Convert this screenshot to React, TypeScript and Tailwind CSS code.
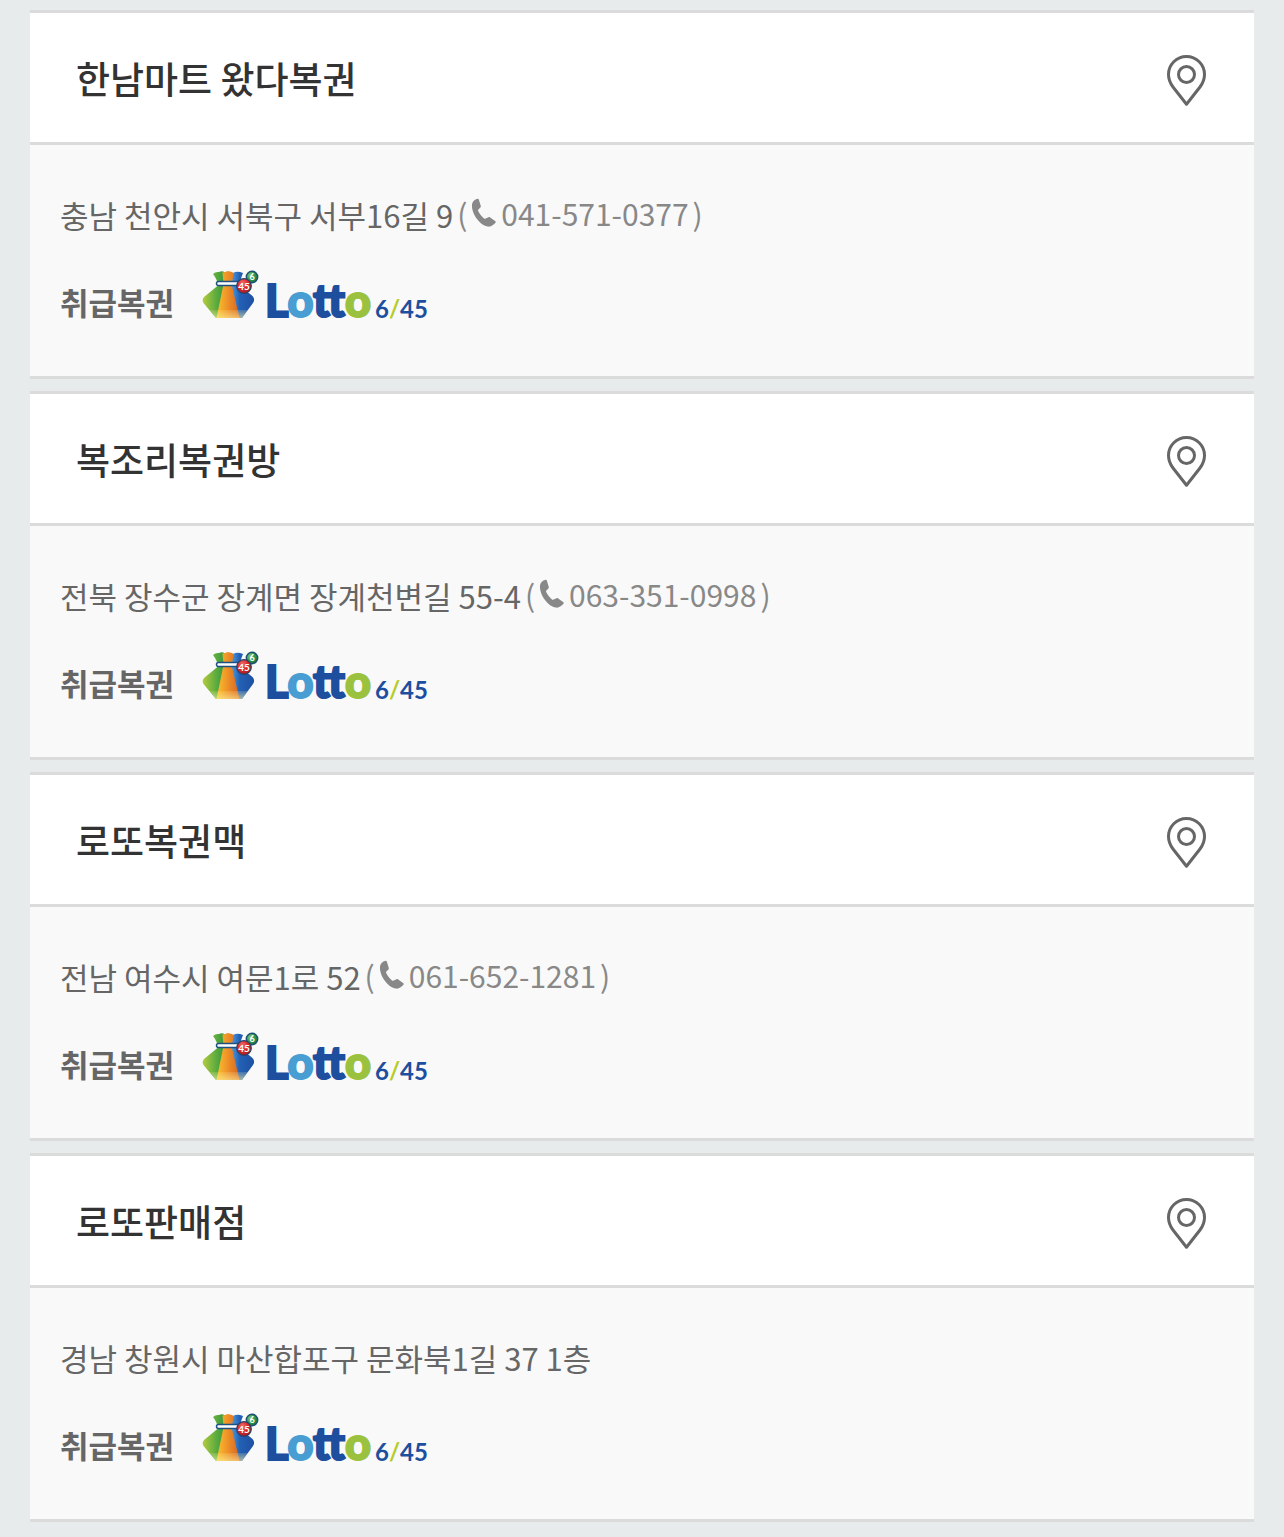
type Store = { name: string; address: string; phone?: string };

const stores: Store[] = [
  { name: '한남마트 왔다복권', address: '충남 천안시 서북구 서부16길 9', phone: '041-571-0377' },
  { name: '복조리복권방', address: '전북 장수군 장계면 장계천변길 55-4', phone: '063-351-0998' },
  { name: '로또복권맥', address: '전남 여수시 여문1로 52', phone: '061-652-1281' },
  { name: '로또판매점', address: '경남 창원시 마산합포구 문화북1길 37 1층' },
];

function PinIcon() {
  return (
    <svg width="40" height="56" viewBox="0 -3 40 56" fill="none" stroke="#666" strokeWidth="3" aria-hidden="true">
      <path d="M20.500 51.200L7 34C4 30 2.500 26 2.500 21.500a18 18 0 0 1 36 0C38.500 26 37 30 34 34Z" strokeLinejoin="round" />
      <circle cx="20.500" cy="21.500" r="8" />
    </svg>
  );
}

function PhoneIcon() {
  return (
    <svg width="26" height="30" viewBox="0 0 26 30" fill="#888" aria-hidden="true">
      <path d="M1 6.500C1.300 3.500 3.600 1.600 6.600.7c.6-.2 1 .1 1.200.7l2 6.500c.2.600 0 1-.4 1.500l-2 2c-.5.500-.5 1-.2 1.700 1.300 2.900 3.300 5.400 5.800 7.300.5.400 1 .4 1.600.1l3-1.300c.6-.3 1.100-.2 1.600.2l5.200 3.800c.5.400.6.900.2 1.400-1.700 2.400-4.500 4.300-7.600 4C9.500 27.800.2 16 1 6.500Z" />
    </svg>
  );
}

/** Pouch emblem followed by the Lotto 6/45 wordmark. */
function LottoLogo({ id }: { id: string }) {
  return (
    <svg width="232" height="64" viewBox="0 0 232 64" role="img" aria-label="Lotto 6/45">
      <defs>
        <linearGradient id={`${id}-green`} x1="0" y1="0" x2="1" y2="0">
          <stop offset="0" stopColor="#b5cb3f" />
          <stop offset="0.55" stopColor="#5dac3f" />
          <stop offset="1" stopColor="#2c9440" />
        </linearGradient>
        <linearGradient id={`${id}-orange`} x1="0" y1="0" x2="1" y2="0">
          <stop offset="0" stopColor="#f8c22e" />
          <stop offset="0.5" stopColor="#ee9028" />
          <stop offset="1" stopColor="#d56524" />
        </linearGradient>
        <linearGradient id={`${id}-blue`} x1="0" y1="0" x2="1" y2="0">
          <stop offset="0" stopColor="#55a7e5" />
          <stop offset="0.4" stopColor="#2360b4" />
          <stop offset="1" stopColor="#1d50a2" />
        </linearGradient>
        <linearGradient id={`${id}-shine`} x1="0" y1="0" x2="0" y2="1">
          <stop offset="0" stopColor="#fff3a0" stopOpacity="0.15" />
          <stop offset="1" stopColor="#fff3a0" stopOpacity="0.6" />
        </linearGradient>
        <radialGradient id={`${id}-red`} cx="0.4" cy="0.3" r="0.7">
          <stop offset="0" stopColor="#f07068" />
          <stop offset="0.5" stopColor="#dd2b2d" />
          <stop offset="1" stopColor="#a91d25" />
        </radialGradient>
        <radialGradient id={`${id}-ball`} cx="0.35" cy="0.35" r="0.75">
          <stop offset="0" stopColor="#84c58b" />
          <stop offset="0.5" stopColor="#2f9a4c" />
          <stop offset="1" stopColor="#187038" />
        </radialGradient>
      </defs>
      <path d="M11 6q2.500-2.500 6-2Q20 2.500 23 4.500L25 17 18 50h-4L1.500 35q-2-3 .5-6L16 17.500Q15.500 12 11 6Z" fill={`url(#${id}-green)`} />
      <path d="M31 5q4-2.500 10 0-2.500 6-4 12L50.500 28q3 3.500 .5 7L40 50h-4L28 17Z" fill={`url(#${id}-blue)`} />
      <path d="M20.500 4.500q3-.5 5-1.500 4 .5 6.500 2L29.500 16l8 34H14.500L21.500 16Z" fill={`url(#${id}-orange)`} />
      <path d="M8 42h38l-6 8H14Z" fill={`url(#${id}-shine)`} />
      <rect x="14.500" y="13.500" width="25" height="4" rx="2" fill="#fff" stroke="#1c5182" strokeWidth="1.500" />
      <circle cx="50" cy="9" r="5.700" fill={`url(#${id}-ball)`} stroke="#1c5173" strokeWidth="1.400" />
      <circle cx="42" cy="18" r="7.300" fill={`url(#${id}-red)`} stroke="#294168" strokeWidth="1.200" />
      <g fill="#fff" textAnchor="middle" className="font-['Lato'] font-bold">
        <text x="50" y="12" fontSize="9">6</text>
        <text x="42" y="22" fontSize="10">45</text>
      </g>
      <text x="63" y="49" fontSize="45" fill="#1e4e9e" stroke="#1e4e9e" strokeWidth="2" className="font-['Lato'] font-black">
        L<tspan fill="#489ed2" stroke="#489ed2">o</tspan>tt<tspan fill="#9bc23e" stroke="#9bc23e">o</tspan>
      </text>
      <text x="173" y="50" fontSize="24" fill="#1e4e9e" className="font-['Lato'] font-bold">
        6<tspan fill="#b5cc28">/</tspan>45
      </text>
    </svg>
  );
}

function StoreCard({ store, id }: { store: Store; id: string }) {
  return (
    <li className="border-y-3 border-[#dbdbdb]">
      <div className="flex items-center justify-between border-b-3 border-[#dbdbdb] bg-white pt-[37px] pr-12 pb-9 pl-[46px]">
        <h2 className="text-[37px] leading-[56px] font-medium text-[#333]">{store.name}</h2>
        <button type="button" aria-label={`${store.name} 위치 보기`} className="cursor-pointer">
          <PinIcon />
        </button>
      </div>
      <div className="bg-[#f9f9f9] px-[30px] pt-[46px] pb-11">
        <p className="flex flex-wrap items-end text-[31px] leading-[48px] text-[#666]">
          <span>{store.address}</span>
          {store.phone && (
            <span className="ml-1 flex items-center pb-1 text-[30px] leading-[44px] text-[#888]">
              (
              <a href={`tel:${store.phone}`} className="mx-1 flex items-center gap-1">
                <PhoneIcon />
                {store.phone}
              </a>
              )
            </span>
          )}
        </p>
        <div className="mt-[29px] flex items-start">
          <h3 className="pt-[14px] text-[31px] leading-10 font-bold text-[#666]">취급복권</h3>
          <div className="ml-7">
            <LottoLogo id={id} />
          </div>
        </div>
      </div>
    </li>
  );
}

export default function App() {
  return (
    <main className="min-h-screen bg-[#e7ebec] px-[30px] pt-2.5 pb-4 font-['Noto_Sans_CJK_KR',sans-serif]">
      <ul className="flex flex-col gap-3">
        {stores.map((store, i) => (
          <StoreCard key={store.name} store={store} id={`lotto-${i}`} />
        ))}
      </ul>
    </main>
  );
}
